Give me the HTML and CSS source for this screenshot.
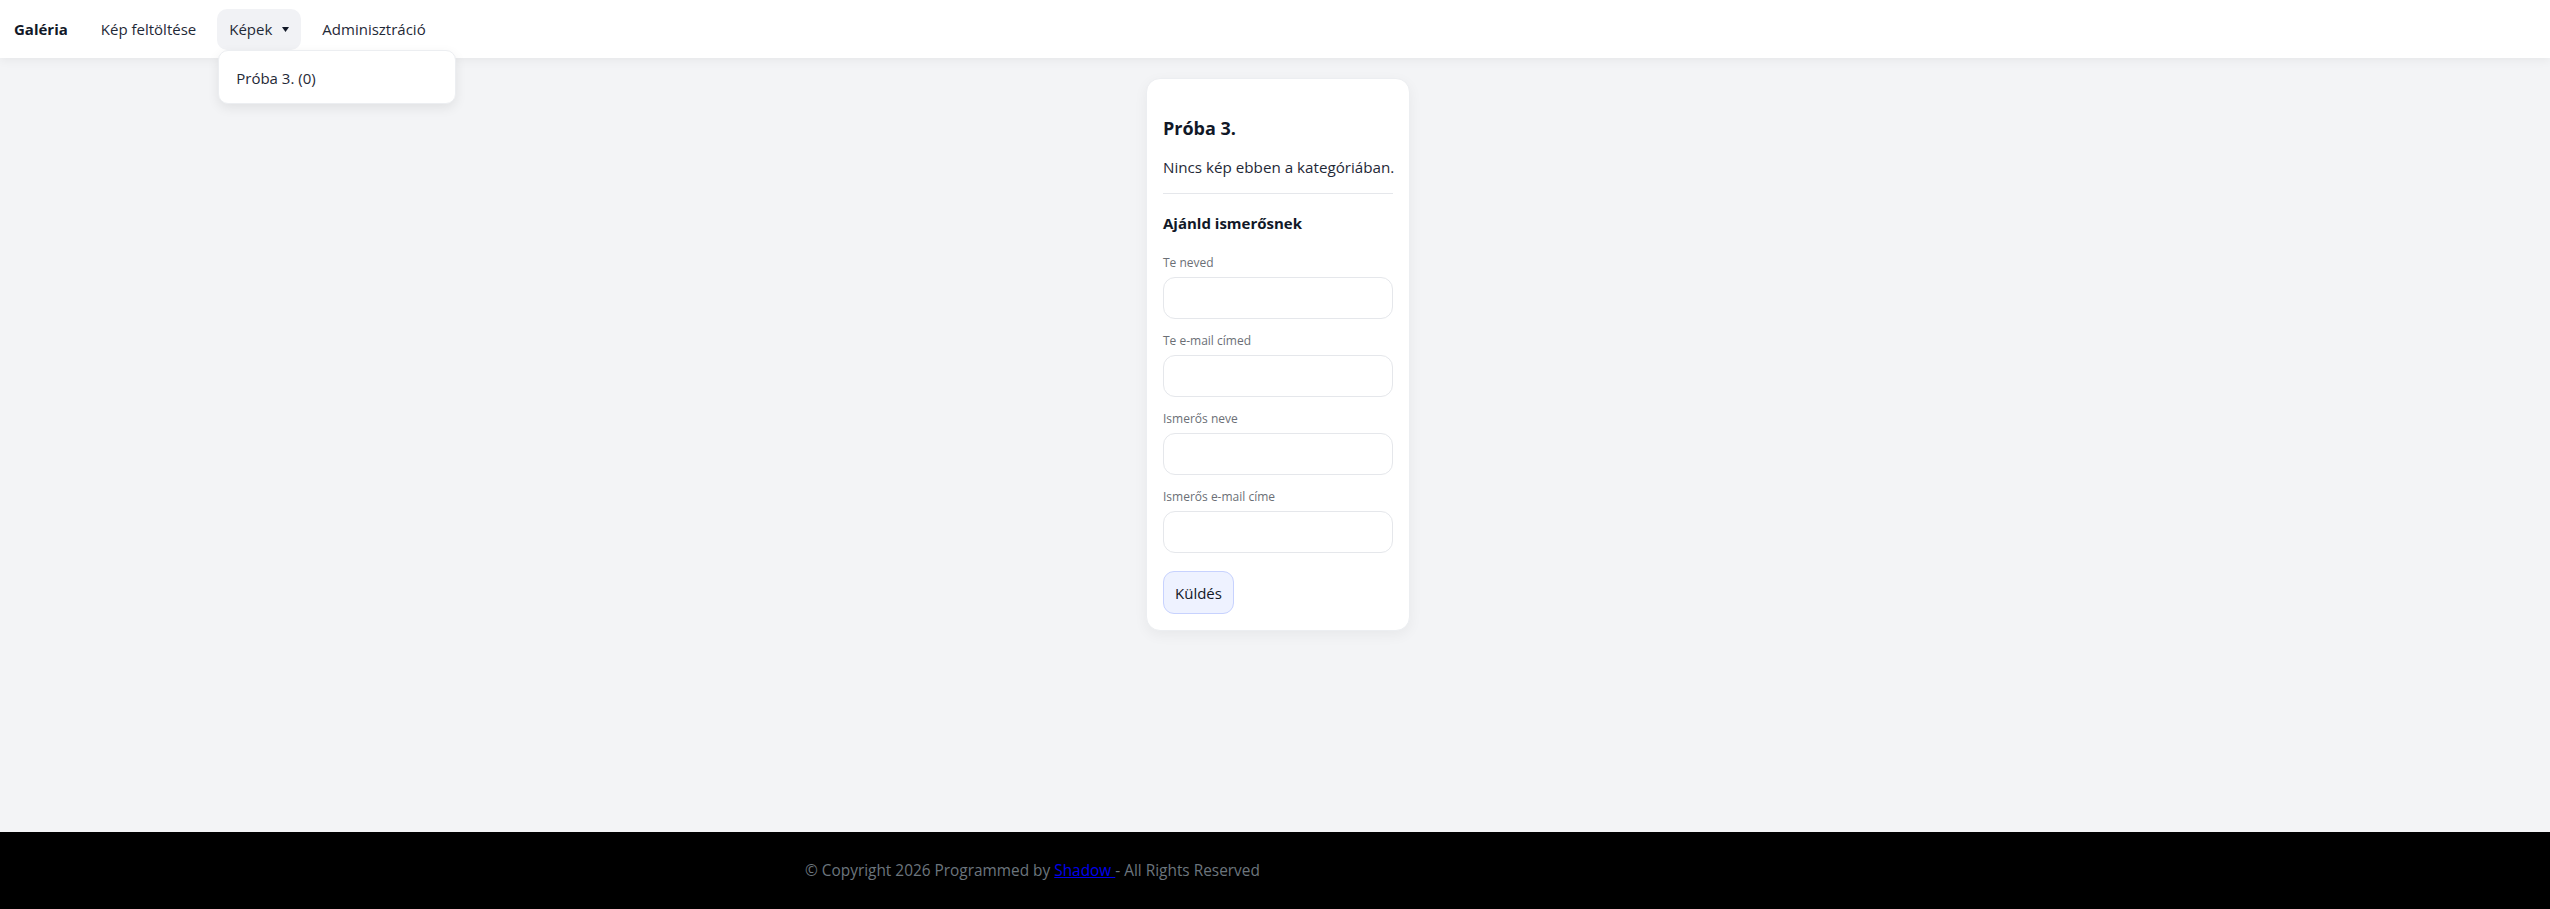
FILE: index.html
```html
<!DOCTYPE html>
<html lang="hu">
<head>
<meta charset="utf-8">
<title>Galéria</title>
<link rel="stylesheet" href="styles.css">
</head>
<body>
<header class="navbar">
  <a class="brand" href="#">Galéria</a>
  <nav class="nav">
    <a class="nav-link" href="#">Kép feltöltése</a>
    <div class="dropdown">
      <button class="nav-link dropdown-toggle" type="button">Képek <svg class="caret" width="7" height="5" viewBox="0 0 7 5"><path d="M0 0h7L3.5 5z" fill="#111827"/></svg></button>
      <div class="dropdown-menu">
        <a class="dropdown-item" href="#">Próba 3. (0)</a>
      </div>
    </div>
    <a class="nav-link" href="#">Adminisztráció</a>
  </nav>
</header>

<main class="main">
  <section class="card">
    <h2 class="card-title">Próba 3.</h2>
    <p class="empty">Nincs kép ebben a kategóriában.</p>
    <hr class="divider">
    <h3 class="form-title">Ajánld ismerősnek</h3>
    <form class="form">
      <div class="field">
        <label class="label">Te neved</label>
        <input class="input" type="text">
      </div>
      <div class="field">
        <label class="label">Te e-mail címed</label>
        <input class="input" type="email">
      </div>
      <div class="field">
        <label class="label">Ismerős neve</label>
        <input class="input" type="text">
      </div>
      <div class="field">
        <label class="label">Ismerős e-mail címe</label>
        <input class="input" type="email">
      </div>
      <button class="btn" type="button">Küldés</button>
    </form>
  </section>
</main>

<footer class="footer">
  <p class="footer-text">© Copyright 2026 Programmed by <a class="footer-link" href="#">Shadow </a> - All Rights Reserved</p>
</footer>
</body>
</html>
```

FILE: styles.css
```css
* { box-sizing: border-box; }

html, body {
  margin: 0;
  padding: 0;
}

body {
  min-height: 100vh;
  display: flex;
  flex-direction: column;
  background: #f3f4f6;
  font-family: "Open Sans", "Noto Sans", "Liberation Sans", sans-serif;
  font-size: 16px;
  color: #111827;
}

a { text-decoration: none; color: inherit; }

.navbar {
  position: relative;
  z-index: 2;
  height: 58px;
  background: #ffffff;
  box-shadow: 0 2px 10px rgba(0, 0, 0, 0.06);
  display: flex;
  align-items: center;
  padding-left: 14px;
}

.brand {
  font-weight: 700;
  font-size: 15px;
  color: #111827;
  margin-right: 21px;
}

.nav {
  display: flex;
  align-items: center;
  gap: 9px;
}

.nav-link {
  display: flex;
  align-items: center;
  gap: 10px;
  height: 41px;
  padding: 0 12px;
  font-family: inherit;
  font-size: 15px;
  color: #1f2937;
  background: transparent;
  border: 0;
  border-radius: 10px;
}

.dropdown {
  position: relative;
}

.dropdown-toggle {
  background: #f1f2f5;
  cursor: pointer;
}

.caret { margin-top: 1px; }

.dropdown-menu {
  position: absolute;
  top: 41px;
  left: 1px;
  width: 238px;
  background: #ffffff;
  border: 1px solid #eceef1;
  border-radius: 10px;
  box-shadow: 0 4px 12px rgba(0, 0, 0, 0.08);
  padding: 15px 17px 13px;
}

.dropdown-item {
  display: block;
  font-size: 15px;
  line-height: 24px;
  color: #1f2937;
}

.main {
  flex: 1;
  display: flex;
  justify-content: center;
  align-items: flex-start;
  padding-top: 20px;
  padding-left: 6px;
}

.card {
  width: 264px;
  background: #ffffff;
  border: 1px solid #eceef1;
  border-radius: 14px;
  box-shadow: 0 4px 14px rgba(0, 0, 0, 0.05);
  padding: 15px 16px 16px;
}

.card-title {
  margin: 20px 0 13px;
  font-size: 18px;
  line-height: 28px;
  font-weight: 700;
  color: #111827;
}

.empty {
  margin: 0 0 14px;
  font-size: 15.2px;
  line-height: 24px;
  color: #1f2937;
  white-space: nowrap;
}

.divider {
  margin: 0 0 17px;
  border: 0;
  border-top: 1px solid #e5e7eb;
}

.form-title {
  margin: 0 0 20px;
  font-size: 15px;
  line-height: 24px;
  font-weight: 700;
  color: #111827;
}

.form {
  display: flex;
  flex-direction: column;
}

.field {
  display: flex;
  flex-direction: column;
  margin-bottom: 14px;
}

.label {
  font-size: 12px;
  line-height: 16px;
  color: #6b6f76;
  margin-bottom: 6px;
}

.input {
  height: 42px;
  width: 100%;
  border: 1px solid #e5e7eb;
  border-radius: 12px;
  background: #ffffff;
  font-family: inherit;
  font-size: 15px;
  padding: 0 12px;
}

.btn {
  align-self: flex-start;
  margin-top: 4px;
  height: 43px;
  padding: 0 11px;
  font-family: inherit;
  font-size: 15px;
  color: #111827;
  background: #eef2ff;
  border: 1px solid #c7d2fe;
  border-radius: 11px;
}

.footer {
  height: 77px;
  background: #000000;
  display: flex;
  align-items: center;
  padding-left: 805px;
}

.footer-text {
  margin: 0;
  font-size: 15.4px;
  color: #6c757d;
}

.footer-link {
  color: #0000ee;
  text-decoration: underline;
}
```
